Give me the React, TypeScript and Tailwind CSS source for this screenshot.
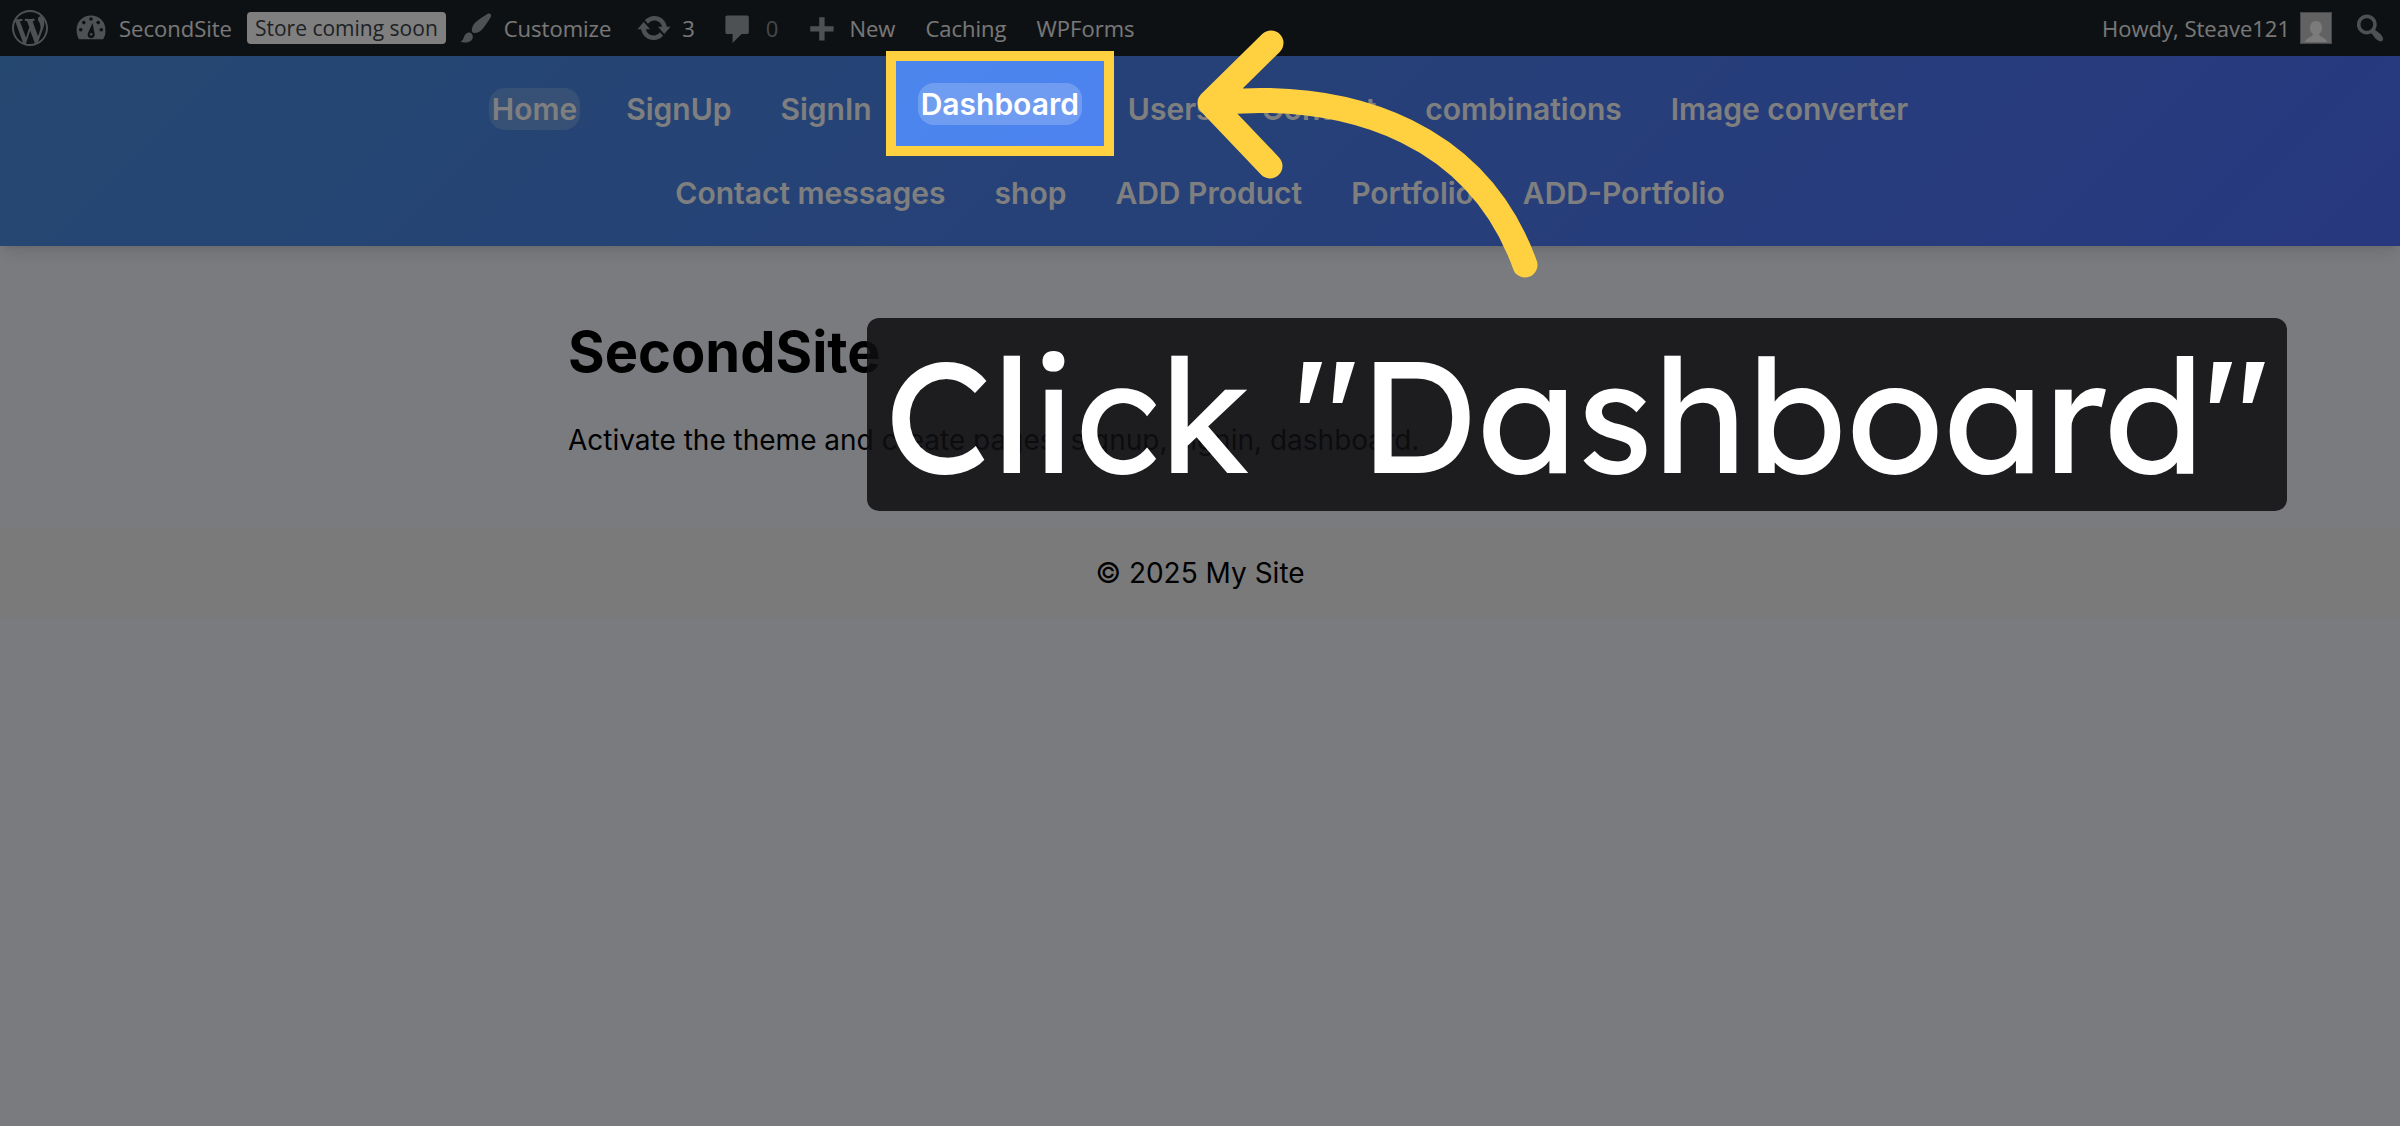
import type { ReactNode } from 'react';

const ICONS = {
  wordpress:
    'M20 10c0-5.51-4.49-10-10-10C4.48 0 0 4.49 0 10c0 5.52 4.48 10 10 10 5.51 0 10-4.48 10-10zM7.78 15.37L4.37 6.22c.55-.02 1.17-.08 1.17-.08.5-.06.44-1.13-.06-1.11 0 0-1.45.11-2.37.11-.18 0-.37 0-.58-.01C4.12 2.69 6.87 1.11 10 1.11c2.33 0 4.45.87 6.05 2.34-.68-.11-1.65.39-1.65 1.58 0 .74.45 1.36.9 2.1.35.61.55 1.36.55 2.46 0 1.49-1.4 5-1.4 5l-3.03-8.37c.54-.02.82-.17.82-.17.5-.05.44-1.25-.06-1.22 0 0-1.44.12-2.38.12-.87 0-2.33-.12-2.33-.12-.5-.03-.56 1.2-.06 1.22l.92.08 1.26 3.41zM17.41 10c.24-.64.74-1.87.43-4.25.7 1.29 1.05 2.71 1.05 4.25 0 3.29-1.73 6.24-4.4 7.78.97-2.59 1.94-5.2 2.92-7.78zM6.1 18.09C3.12 16.65 1.11 13.53 1.11 10c0-1.3.23-2.48.72-3.59C3.25 10.3 4.67 14.2 6.1 18.09zm4.03-6.63l2.58 6.98c-.86.29-1.76.45-2.71.45-.79 0-1.57-.11-2.29-.33.81-2.38 1.62-4.74 2.42-7.1z',
  brush:
    'M18.33 3.57s.27-.8-.31-1.36c-.53-.52-1.22-.24-1.22-.24-.61.3-5.76 3.47-7.67 5.57-.86.96-2.06 3.79-1.09 4.82.92.98 3.96-.17 4.79-1 2.06-2.06 5.21-7.17 5.5-7.79zM1.4 17.65c2.37-1.56 1.46-3.41 3.23-4.64.93-.65 2.22-.62 3.08.29.63.67.8 2.57-.16 3.46-1.57 1.45-4 1.55-6.15.89z',
  update:
    'M10.2 3.28c3.53 0 6.43 2.61 6.92 6h2.08l-3.5 4-3.5-4h2.32c-.45-1.97-2.21-3.45-4.32-3.45-1.45 0-2.73.71-3.54 1.78L4.95 5.66C6.23 4.2 8.11 3.28 10.2 3.28zm-.4 13.44c-3.52 0-6.43-2.61-6.92-6H.8l3.5-4c1.17 1.33 2.33 2.67 3.5 4H5.48c.45 1.97 2.21 3.45 4.32 3.45 1.45 0 2.73-.71 3.54-1.78l1.71 1.95c-1.28 1.46-3.15 2.38-5.25 2.38z',
  comment:
    'M4 3h11c.55 0 1 .45 1 1v8.4c0 .55-.45 1-1 1h-3l-5 5v-5H4c-.55 0-1-.45-1-1V4c0-.55.45-1 1-1z',
  plus: 'M17 9v3h-5v5H9v-5H4V9h5V4h3v5h5z',
  search:
    'M12.14 4.18c1.87 1.87 2.11 4.75.72 6.89.12.1.22.21.36.31.2.16.47.36.81.59.34.24.56.39.66.47.42.31.73.57.94.78.32.32.6.65.84 1 .25.35.44.69.59 1.04.14.35.21.68.18 1-.02.32-.14.59-.36.81s-.49.34-.81.36c-.31.02-.65-.04-.99-.19-.35-.14-.7-.34-1.04-.59-.35-.24-.68-.52-1-.84-.21-.21-.47-.52-.77-.93-.1-.13-.25-.35-.47-.66-.22-.32-.4-.57-.56-.78-.16-.2-.29-.35-.44-.5-2.07 1.09-4.69.76-6.44-.98-2.14-2.15-2.14-5.64 0-7.78 2.15-2.15 5.63-2.15 7.78 0zm-1.41 6.36c1.36-1.37 1.36-3.58 0-4.95-1.37-1.37-3.59-1.37-4.95 0-1.37 1.37-1.37 3.58 0 4.95 1.36 1.37 3.58 1.37 4.95 0z',
};

function Icon({ name }: { name: keyof typeof ICONS }) {
  return (
    <svg viewBox="0 0 20 20" className="size-9 shrink-0 fill-[#9ca2a6]" aria-hidden="true">
      <path d={ICONS[name]} />
    </svg>
  );
}

function GaugeIcon() {
  return (
    <svg viewBox="0 0 20 20" className="size-9 shrink-0" aria-hidden="true">
      <path className="fill-[#9ca2a6]" d="M3.3 16.300h13.400A8 8 0 0 0 18 11a8 8 0 0 0-16 0c0 2 .5 3.800 1.300 5.300z" />
      <g className="fill-[#1d2327]">
        <circle cx="10" cy="5" r="1" />
        <circle cx="6" cy="7" r="1" />
        <circle cx="14" cy="7" r="1" />
        <circle cx="4.300" cy="11" r="1" />
        <circle cx="15.700" cy="11" r="1" />
        <path d="M10.900 7.200l1 5.600a2 2 0 1 1-3.500-.1z" />
      </g>
      <circle cx="10.100" cy="13.500" r=".7" className="fill-[#9ca2a6]" />
    </svg>
  );
}

function BarLink({ children, className = '' }: { children: ReactNode; className?: string }) {
  return (
    <a href="#" className={`flex h-14 items-center gap-2.5 whitespace-nowrap ${className}`}>
      {children}
    </a>
  );
}

function AdminBar() {
  return (
    <div className="flex h-14 items-center justify-between bg-[#1d2327] px-3 font-['Open_Sans','Noto_Sans',sans-serif] text-[22px] text-[#f0f0f1]">
      <div className="flex items-center">
        <BarLink><Icon name="wordpress" /></BarLink>
        <BarLink className="ml-[25px]"><GaugeIcon />SecondSite</BarLink>
        <BarLink className="ml-[15px]">
          <span className="rounded-sm bg-white px-2 text-[21px] leading-8 text-[#3c434a]">Store coming soon</span>
        </BarLink>
        <BarLink className="ml-3"><Icon name="brush" />Customize</BarLink>
        <BarLink className="ml-[25px]"><Icon name="update" />3</BarLink>
        <BarLink className="ml-[25px]">
          <Icon name="comment" />
          <span className="text-[#8e9194]">0</span>
        </BarLink>
        <BarLink className="ml-[25px]"><Icon name="plus" />New</BarLink>
        <BarLink className="ml-[30px]">Caching</BarLink>
        <BarLink className="ml-[30px]">WPForms</BarLink>
      </div>
      <div className="flex items-center">
        <BarLink>
          Howdy, Steave121
          <svg viewBox="0 0 32 32" className="size-8" aria-hidden="true">
            <rect width="32" height="32" fill="#8c8f94" />
            <rect x="1" y="1" width="30" height="30" fill="#c5c5c5" />
            <path d="M16 9c4 0 6 3 6 7 0 3-1.500 5-3 6 0 3 6 3 8 8H5c2-5 8-5 8-8-1.500-1-3-3-3-6 0-4 2-7 6-7z" fill="#f6f6f6" />
          </svg>
        </BarLink>
        <button type="button" aria-label="Search" className="ml-5"><Icon name="search" /></button>
      </div>
    </div>
  );
}

// Spotlight frame, arrow and caption, all anchored to the highlighted link
function Callout() {
  return (
    <>
      <span className="absolute -left-8 -top-8 h-[105px] w-[228px] border-10 border-[#ffd140] shadow-[0_0_0_9999px_rgba(0,0,0,0.5)]" />
      <svg viewBox="1190 20 360 264" className="absolute -top-16 left-[271px] h-[264px] w-[360px]" fill="none" aria-hidden="true">
        <path
          d="M1272 44L1211 104L1271 167M1211 104C1361 89 1481 141 1526 266"
          stroke="#ffd140"
          strokeWidth="25"
          strokeLinecap="round"
          strokeLinejoin="round"
        />
      </svg>
      <span className="absolute -left-[51px] top-[235px] whitespace-nowrap rounded-xl bg-[#0e0e10]/86 px-[18px] font-[Lexend,Lato,sans-serif] text-[158px] leading-[193px] font-normal text-white">
        Click "Dashboard"
      </span>
    </>
  );
}

const ROWS = [
  ['Home', 'SignUp', 'SignIn', 'Dashboard', 'Users', 'Contact', 'combinations', 'Image converter'],
  ['Contact messages', 'shop', 'ADD Product', 'Portfolio', 'ADD-Portfolio'],
];

function NavLink({ label }: { label: string }) {
  if (label === 'Dashboard') {
    return (
      <span className="relative -translate-y-[5px]">
        <a href="#" className="block rounded-2xl bg-white/20 px-[3px]">{label}</a>
        <Callout />
      </span>
    );
  }
  return (
    <a href="#" className={label === 'Home' ? 'rounded-2xl bg-white/20 px-[3px]' : 'px-[3px]'}>
      {label}
    </a>
  );
}

export default function App() {
  return (
    <div className="min-h-screen overflow-hidden bg-[#f5f7ff] font-[Inter,sans-serif]">
      <AdminBar />
      <header className="relative z-10 bg-linear-135 from-[#4a90e2] to-[#5070ff] py-8 shadow-lg">
        <nav className="flex flex-col gap-[42px] text-[30px] leading-[42px] font-semibold text-white">
          {ROWS.map((row, i) => (
            <div key={i} className="flex justify-center gap-[43px]">
              {row.map(label => <NavLink key={label} label={label} />)}
            </div>
          ))}
        </nav>
      </header>
      <main className="mx-auto max-w-[1264px] pt-[66px] pb-[68px]">
        <h1 className="text-[56px] leading-[80px] font-bold text-black">SecondSite</h1>
        <p className="mt-7 text-[28px] leading-10 text-black">
          Activate the theme and create pages: signup, signin, dashboard.
        </p>
      </main>
      <footer className="bg-[#f5f5f5] py-[25px] text-center text-[28px] leading-10 text-black">© 2025 My Site</footer>
    </div>
  );
}
